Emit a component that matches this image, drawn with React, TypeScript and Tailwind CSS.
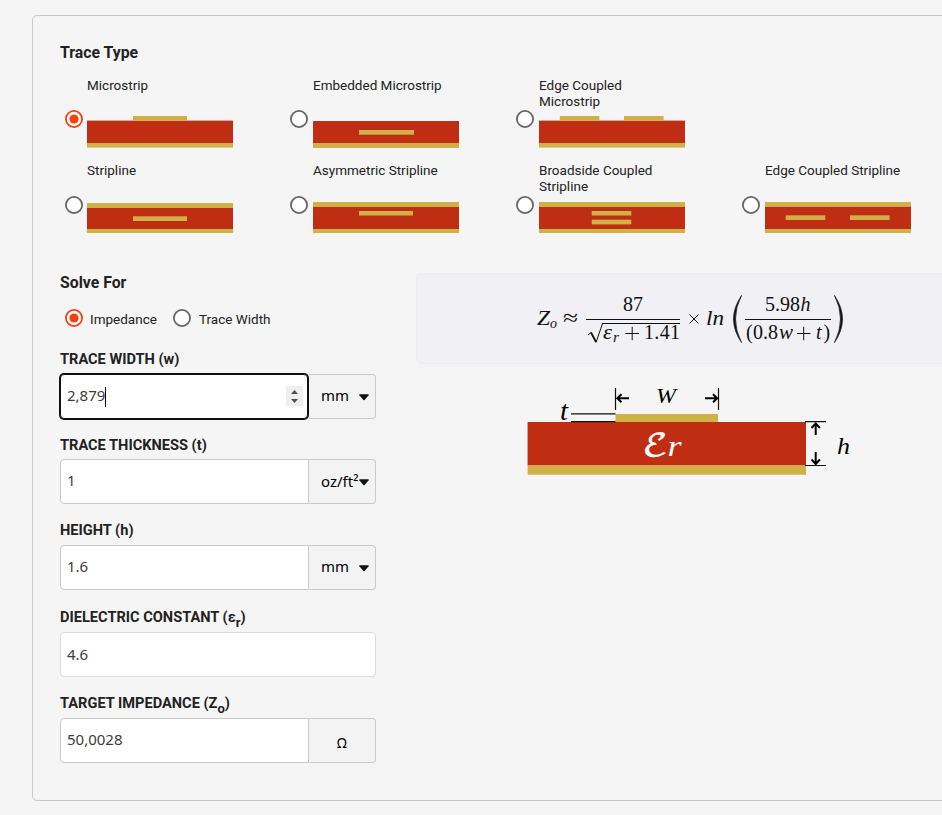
import React from "react";

const RED = "#bf2e12";
const GOLD = "#cfb147";

type Bar = [x: number, y: number, w: number, h: number];

interface Trace {
  lines: string[];
  checked?: boolean;
  red: [number, number];
  gold: [number, number][];
  strips: Bar[];
}

const rowOne: Trace[] = [
  { lines: ["Microstrip"], checked: true, red: [11.6, 34], gold: [[34, 38.6]], strips: [[46, 7, 54, 4.6]] },
  { lines: ["Embedded Microstrip"], red: [12, 34], gold: [[34, 39]], strips: [[46, 21, 55, 4.7]] },
  { lines: ["Edge Coupled", "Microstrip"], red: [11.6, 34], gold: [[34, 38.6]], strips: [[20.8, 7, 39.6, 4.6], [85, 7, 39.6, 4.6]] },
];

const rowTwo: Trace[] = [
  { lines: ["Stripline"], red: [14, 35], gold: [[9, 14], [35, 39]], strips: [[46, 22.3, 54, 4.7]] },
  { lines: ["Asymmetric Stripline"], red: [13, 35], gold: [[8, 13], [35, 39]], strips: [[46, 17, 54, 4.5]] },
  { lines: ["Broadside Coupled", "Stripline"], red: [13, 35], gold: [[8, 13], [35, 39]], strips: [[52.7, 17, 39.6, 4.5], [52.7, 25.7, 39.6, 4.7]] },
  { lines: ["Edge Coupled Stripline"], red: [12.5, 35], gold: [[8, 12.5], [35, 39]], strips: [[20.7, 21.3, 39.6, 4.7], [85, 21.3, 39.6, 4.7]] },
];

function Radio({ checked }: { checked?: boolean }) {
  return (
    <svg width="18" height="18" viewBox="0 0 18 18" className="block shrink-0">
      <circle cx="9" cy="9" r="8.1" fill="#fff" stroke={checked ? "#f04314" : "#666"} strokeWidth="1.8" />
      {checked && <circle cx="9" cy="9" r="4.6" fill="#f04314" />}
    </svg>
  );
}

function TraceOption({ trace, radioClass }: { trace: Trace; radioClass: string }) {
  return (
    <div className="flex w-[226px]">
      <div className={`w-[27px] shrink-0 ${radioClass}`}>
        <Radio checked={trace.checked} />
      </div>
      <div className="w-[146px]">
        <div className="h-8 text-[13.5px] leading-4 whitespace-nowrap">
          {trace.lines.map((line) => (
            <div key={line}>{line}</div>
          ))}
        </div>
        <svg width="146" height="40" viewBox="0 0 146 40" className="block">
          <rect x="0" y={trace.red[0]} width="146" height={trace.red[1] - trace.red[0]} fill={RED} />
          {trace.gold.map(([a, b]) => (
            <rect key={a} x="0" y={a} width="146" height={b - a} fill={GOLD} />
          ))}
          {trace.strips.map(([x, y, w, h]) => (
            <rect key={`${x}-${y}`} x={x} y={y} width={w} height={h} fill={GOLD} />
          ))}
        </svg>
      </div>
    </div>
  );
}

function Caret() {
  return (
    <svg width="10" height="7" viewBox="0 0 10 7" className="mt-px mr-[6px] ml-auto shrink-0">
      <path d="M.6 .3H9.4Q10 .5 9.6 1.2L5.6 5.9Q5 6.5 4.4 5.9L.4 1.2Q0 .5 .6 .3Z" fill="#111" />
    </svg>
  );
}

const sans = "font-['Noto_Sans','Open_Sans',sans-serif]";

function Label({ children }: { children: React.ReactNode }) {
  return <div className="h-5 text-[14.6px] leading-5 font-bold whitespace-nowrap">{children}</div>;
}

function Field({ value, unit, focused }: { value: string; unit?: React.ReactNode; focused?: boolean }) {
  return (
    <div className={`flex h-[45px] w-[316px] text-[15px] ${sans}`}>
      <div
        className={`flex items-center bg-white pl-[6px] text-[#3c3c3c] ${
          focused
            ? "z-10 mr-px w-[248px] rounded-[4px] border border-[#111] ring-1 ring-[#111]"
            : unit
              ? "w-[249px] rounded-l-[4px] border border-[#c9c9c9]"
              : "w-full rounded-[4px] border border-[#dcdcdc]"
        }`}
      >
        <span className={unit ? "mb-[2px]" : ""}>{value}</span>
        {focused && <span className="h-5 w-px bg-black" />}
        {focused && (
          <svg width="17" height="20" viewBox="0 0 17 20" className="mr-[4px] mb-px ml-auto">
            <rect width="17" height="20" fill="#efefef" />
            <path d="M5 8 8.5 4 12 8ZM5 13 8.5 17 12 13Z" fill="#505050" />
          </svg>
        )}
      </div>
      {unit && (
        <div className="flex flex-1 items-center rounded-r-[4px] border border-l-0 border-[#c9c9c9] bg-[#f3f3f3] pl-3 text-black">{unit}</div>
      )}
    </div>
  );
}

const math = "'DejaVu Math TeX Gyre','Liberation Serif',serif";
const serif = "'Liberation Serif','Times New Roman',serif";

function Formula() {
  return (
    <svg width="526" height="89" viewBox="417 274 526 89" className="block" fill="#111" fontFamily={serif} fontSize="20">
      <text x="537" y="325" fontStyle="italic" textLength="13" lengthAdjust="spacingAndGlyphs">Z</text>
      <text x="550" y="328" fontStyle="italic" fontSize="14">o</text>
      <text x="563" y="325" textLength="15" lengthAdjust="spacingAndGlyphs" fontSize="22">≈</text>
      <text x="623" y="311" textLength="20">87</text>
      <path d="M586 319.5H680M602 323.5H680" stroke="#111" strokeWidth="1" />
      <path d="M588 335 591 332.5" stroke="#111" strokeWidth="1" fill="none" />
      <path d="M591 332.5 596 342" stroke="#111" strokeWidth="1.8" fill="none" />
      <path d="M596 342.5 602.5 323.5" stroke="#111" strokeWidth="1" fill="none" />
      <text x="603" y="339" fontStyle="italic" textLength="9" lengthAdjust="spacingAndGlyphs">ε</text>
      <text x="613" y="342" fontStyle="italic" fontSize="14" textLength="6" lengthAdjust="spacingAndGlyphs">r</text>
      <path d="M625.5 333.5H639M632.2 326.8V340.2" stroke="#111" strokeWidth="1" />
      <text x="644" y="339" textLength="36">1.41</text>
      <path d="M689.5 314.5 698.5 323.5M698.5 314.5 689.5 323.5" stroke="#111" strokeWidth="1" />
      <text x="706" y="325" fontStyle="italic" textLength="18" lengthAdjust="spacingAndGlyphs">ln</text>
      <path d="M741.5 295.5Q725.5 319 741.5 342.5Q729.5 319 741.5 295.5Z" stroke="#111" strokeWidth=".7" />
      <text x="765" y="311" textLength="35">5.98</text>
      <text x="800.5" y="311" fontStyle="italic" textLength="10" lengthAdjust="spacingAndGlyphs">h</text>
      <path d="M745 319.5H831" stroke="#111" strokeWidth="1" />
      <text x="746" y="339">(</text>
      <text x="753" y="339" textLength="25">0.8</text>
      <text x="779" y="339" fontStyle="italic" textLength="14" lengthAdjust="spacingAndGlyphs">w</text>
      <path d="M797 333.5H810.5M803.7 326.8V340.2" stroke="#111" strokeWidth="1" />
      <text x="816" y="339" fontStyle="italic">t</text>
      <text x="823.5" y="339">)</text>
      <path d="M834.5 295.5Q850.5 319 834.5 342.5Q846.5 319 834.5 295.5Z" stroke="#111" strokeWidth=".7" />
    </svg>
  );
}

function Diagram() {
  return (
    <svg width="350" height="110" viewBox="520 375 350 110" className="block" fontFamily={serif} fontStyle="italic">
      <rect x="527.6" y="422" width="278.4" height="43.5" fill={RED} />
      <rect x="527.6" y="465.5" width="278.4" height="9.2" fill={GOLD} />
      <rect x="615.5" y="414" width="102.5" height="8" fill={GOLD} />
      <path d="M615.5 388V410M718.5 388V410M571 413.8H615.5M571 421.7H615.5M805 421.7H826M805 465.5H826" stroke="#111" strokeWidth="1.2" fill="none" />
      <path
        d="M629 398.3H617.5M621.5 394.3 617.3 398.3 621.5 402.3M705 398.3H717M713 394.3 717.2 398.3 713 402.3M815.7 435V423.5M811.5 428 815.7 423.5 819.9 428M815.7 452V463.5M811.5 459.5 815.7 464 819.9 459.5"
        stroke="#000"
        strokeWidth="2"
        fill="none"
      />
      <text x="656" y="403" fontSize="22" textLength="20" lengthAdjust="spacingAndGlyphs">W</text>
      <text x="560" y="420" fontSize="28" textLength="8" lengthAdjust="spacingAndGlyphs">t</text>
      <text x="837" y="453.5" fontSize="24" textLength="13" lengthAdjust="spacingAndGlyphs">h</text>
      <text x="642.5" y="456" fontSize="31" fill="#fff" stroke="#fff" strokeWidth=".4" fontFamily={math} fontStyle="normal" textLength="26" lengthAdjust="spacingAndGlyphs">ℰ</text>
      <text x="667.5" y="456" fontSize="30" fill="#fff" textLength="14" lengthAdjust="spacingAndGlyphs">r</text>
    </svg>
  );
}

export default function App() {
  return (
    <div className="h-[815px] w-[942px] overflow-hidden bg-[#f5f5f5] pt-[15px] pl-8 font-[Roboto,sans-serif] text-[#222]">
      <div className="h-[786px] w-[960px] rounded-[5px] border border-[#c9c9c9] pt-[26px] pl-[27px]">
        <h2 className="h-5 text-[15.8px] leading-[22px] font-bold">Trace Type</h2>
        <div className="mt-[15px] flex h-[85px]">
          {rowOne.map((t, i) => (
            <TraceOption key={t.lines[0]} trace={t} radioClass={i ? "pl-1 pt-[33px]" : "pl-[5px] pt-[33px]"} />
          ))}
        </div>
        <div className="flex h-[85px]">
          {rowTwo.map((t, i) => (
            <TraceOption key={t.lines[0]} trace={t} radioClass={i ? "pl-1 pt-[34px]" : "pl-[5px] pt-[34px]"} />
          ))}
        </div>
        <div className="mt-[25px] flex">
          <div className="w-[356px] shrink-0">
            <h2 className="h-5 text-[15.8px] leading-[22px] font-bold">Solve For</h2>
            <div className="mt-[17px] flex h-[18px] items-center text-[13.5px]">
              <div className="ml-[5px]"><Radio checked /></div>
              <span className="mt-[2px] ml-[7px] w-[83px]">Impedance</span>
              <Radio />
              <span className="mt-[2px] ml-2">Trace Width</span>
            </div>
            <div className="mt-[22px]"><Label>TRACE WIDTH (w)</Label></div>
            <div className="mt-[5px]"><Field value="2,879" focused unit={<><span className="mb-[2px]">mm</span><Caret /></>} /></div>
            <div className="mt-4"><Label>TRACE THICKNESS (t)</Label></div>
            <div className="mt-1"><Field value="1" unit={<><span className="whitespace-nowrap">oz/ft²</span><Caret /></>} /></div>
            <div className="mt-4"><Label>HEIGHT (h)</Label></div>
            <div className="mt-[5px]"><Field value="1.6" unit={<><span className="mb-[2px]">mm</span><Caret /></>} /></div>
            <div className="mt-[17px]"><Label>DIELECTRIC CONSTANT (ε<sub className="bottom-[-5px] text-[13px]">r</sub>)</Label></div>
            <div className="mt-[5px]"><Field value="4.6" /></div>
            <div className="mt-4"><Label>TARGET IMPEDANCE (Z<sub className="bottom-[-5px] text-[13px]">o</sub>)</Label></div>
            <div className="mt-[5px]"><Field value="50,0028" unit={<span className="mt-[5px] ml-4 text-[13.5px]">Ω</span>} /></div>
          </div>
          <div className="mt-px w-[600px] shrink-0">
            <div className="h-[91px] rounded-[5px] border border-[#eeeef2] bg-[#f0f0f5]">
              <Formula />
            </div>
            <div className="mt-[11px] ml-[104px]">
              <Diagram />
            </div>
          </div>
        </div>
      </div>
    </div>
  );
}
